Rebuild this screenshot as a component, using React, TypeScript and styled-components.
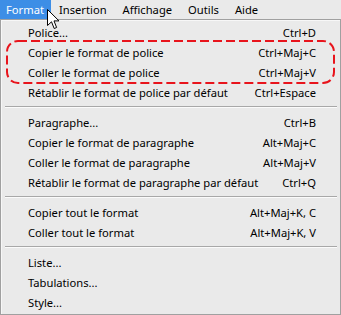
import React from "react";
import styled, { createGlobalStyle } from "styled-components";

const GlobalStyle = createGlobalStyle`
  html, body {
    margin: 0;
    padding: 0;
    background: #eaeaea;
  }
  * {
    box-sizing: border-box;
  }
`;

type Entry =
  | { kind: "item"; label: string; shortcut?: string }
  | { kind: "sep" };

const entries: Entry[] = [
  { kind: "item", label: "Police...", shortcut: "Ctrl+D" },
  { kind: "item", label: "Copier le format de police", shortcut: "Ctrl+Maj+C" },
  { kind: "item", label: "Coller le format de police", shortcut: "Ctrl+Maj+V" },
  { kind: "item", label: "Rétablir le format de police par défaut", shortcut: "Ctrl+Espace" },
  { kind: "sep" },
  { kind: "item", label: "Paragraphe...", shortcut: "Ctrl+B" },
  { kind: "item", label: "Copier le format de paragraphe", shortcut: "Alt+Maj+C" },
  { kind: "item", label: "Coller le format de paragraphe", shortcut: "Alt+Maj+V" },
  { kind: "item", label: "Rétablir le format de paragraphe par défaut", shortcut: "Ctrl+Q" },
  { kind: "sep" },
  { kind: "item", label: "Copier tout le format", shortcut: "Alt+Maj+K, C" },
  { kind: "item", label: "Coller tout le format", shortcut: "Alt+Maj+K, V" },
  { kind: "sep" },
  { kind: "item", label: "Liste..." },
  { kind: "item", label: "Tabulations..." },
  { kind: "item", label: "Style..." },
];

const menus = ["Format", "Insertion", "Affichage", "Outils", "Aide"];

const App = () => {
  return (
    <Wrapper>
      <GlobalStyle />
      <MenuBar>
        {menus.map((m, i) => (
          <BarItem key={m} active={i === 0}>
            {m}
          </BarItem>
        ))}
      </MenuBar>
      <Dropdown>
        {entries.map((e, i) =>
          e.kind === "sep" ? (
            <Separator key={i} />
          ) : (
            <Row key={i}>
              <span>{e.label}</span>
              {e.shortcut && <span>{e.shortcut}</span>}
            </Row>
          )
        )}
      </Dropdown>

      {/* annotation + mouse pointer drawn over the menu */}
      <Highlight width="329" height="44" viewBox="0 0 329 44">
        <rect
          x="1"
          y="1"
          width="327"
          height="42"
          rx="11"
          fill="none"
          stroke="#e8141c"
          strokeWidth="2"
          strokeDasharray="9 4"
        />
      </Highlight>
      <Cursor width="13" height="21" viewBox="0 0 13 21">
        <path
          d="M0.5 0.5 L0.5 16.5 L4.5 12.8 L7.2 19.5 L9.6 18.5 L7 11.9 L12 11.9 Z"
          fill="#fff"
          stroke="#000"
          strokeWidth="1"
          strokeLinejoin="miter"
        />
      </Cursor>
    </Wrapper>
  );
};

export default App;

const Wrapper = styled.div`
  position: relative;
  width: 341px;
  height: 315px;
  overflow: hidden;
  font-family: "Noto Sans", "Open Sans", sans-serif;
  font-size: 11.2px;
  color: #000;
`;

const MenuBar = styled.div`
  display: flex;
  height: 19px;
  background: #eaeaea;
`;

const BarItem = styled.div<{ active?: boolean }>`
  display: flex;
  align-items: center;
  padding: 0 8px;
  height: 19px;
  background: ${(p) => (p.active ? "#3d8ee6" : "transparent")};
  color: ${(p) => (p.active ? "#fff" : "#000")};
  &:first-child {
    padding: 0 7px 0 6px;
  }
`;

const Dropdown = styled.div`
  width: 341px;
  height: 296px;
  border: 1px solid #a0a0a0;
  box-shadow: inset 1px 1px 0 #f7f7f7;
  background: #eaeaea;
  padding: 2px 0;
`;

const Row = styled.div`
  display: flex;
  justify-content: space-between;
  align-items: center;
  height: 20px;
  padding: 0 24px 0 27px;
  white-space: nowrap;
`;

const Separator = styled.div`
  height: 10px;
  margin: 0 3px 0 4px;
  display: flex;
  flex-direction: column;
  justify-content: center;
  &::before {
    content: "";
    height: 1px;
    background: #a8a8a8;
  }
  &::after {
    content: "";
    height: 1px;
    background: #fbfbfb;
  }
`;

const Highlight = styled.svg`
  position: absolute;
  left: 6px;
  top: 40px;
`;

const Cursor = styled.svg`
  position: absolute;
  left: 47px;
  top: 9px;
`;
